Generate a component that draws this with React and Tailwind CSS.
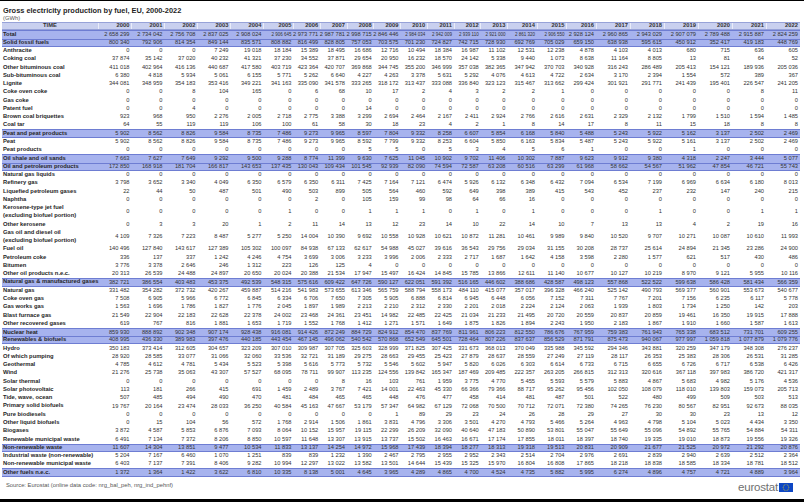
import React from "react";

const YEARS = ["2000","2001","2002","2003","2004","2005","2006","2007","2008","2009","2010","2011","2012","2013","2014","2015","2016","2017","2018","2019","2020","2021","2022"];

const ROWS = [
  ["h","Total","2 658 299,2 734 042,2 756 708,2 837 025,2 908 024,2 906 645,2 973 771,2 987 781,2 998 715,2 846 446,2 984 034,2 942 009,2 939 110,2 921 000,2 861 320,2 906 550,2 928 124,2 960 865,2 943 029,2 907 079,2 789 488,2 915 887,2 824 259"],
  ["h","Solid fossil fuels","800 340,792 906,814 354,849 144,835 571,808 882,816 499,828 805,757 053,703 575,701 230,724 827,742 715,728 930,692 769,705 029,659 150,638 938,595 615,450 912,352 417,419 183,448 769"],
  ["n","Anthracite","0,0,0,7 249,19 018,18 184,15 389,18 495,16 686,12 716,10 494,18 384,16 987,11 102,12 531,12 238,4 878,4 103,4 013,680,715,636,605"],
  ["n","Coking coal","37 874,35 142,37 020,40 232,41 321,37 230,34 552,37 871,29 654,20 950,16 232,18 570,24 142,5 338,9 440,1 073,8 638,11 164,8 805,13,81,64,52"],
  ["n","Other bituminous coal","411 018,402 964,416 136,440 687,417 580,403 719,423 364,420 707,369 868,344 745,355 200,346 999,357 038,382 365,347 942,370 703,340 928,316 243,286 489,205 413,154 121,189 936,205 036"],
  ["n","Sub-bituminous coal","6 380,4 818,5 934,5 061,6 155,5 771,5 262,6 640,4 227,4 263,3 378,5 631,5 292,4 076,4 613,4 722,2 634,3 170,2 394,1 554,572,389,367"],
  ["n","Lignite","344 081,348 959,354 183,353 416,349 221,341 163,335 090,341 578,333 265,318 172,313 437,333 088,336 840,323 123,315 467,313 662,299 424,301 921,291 771,241 439,195 401,226 547,241 205"],
  ["n","Coke oven coke","0,0,8,104,165,0,6,68,10,17,2,4,3,2,2,1,0,0,0,0,0,8,11"],
  ["n","Gas coke","0,0,0,0,0,0,0,0,0,0,0,0,0,0,0,0,0,0,0,0,0,0,0"],
  ["n","Patent fuel","0,0,4,0,0,0,0,0,14,0,0,0,0,0,0,0,0,0,0,0,0,0,0"],
  ["n","Brown coal briquettes","923,968,950,2 276,2 005,2 718,2 775,3 388,3 299,2 694,2 464,2 167,2 411,2 924,2 766,2 616,2 631,2 329,2 132,1 799,1 510,1 594,1 485"],
  ["n","Coal tar","64,55,119,119,106,100,61,58,30,18,23,4,2,1,8,14,17,8,11,15,18,8,8"],
  ["h","Peat and peat products","5 902,8 562,8 826,9 584,8 735,7 486,9 273,9 965,8 597,7 804,9 332,8 258,6 607,5 854,6 168,5 840,5 488,5 243,5 922,5 162,3 137,2 502,2 469"],
  ["n","Peat","5 902,8 562,8 826,9 584,8 735,7 486,9 273,9 965,8 592,7 799,9 332,8 253,6 604,5 850,6 163,5 834,5 487,5 243,5 922,5 161,3 137,2 502,2 469"],
  ["n","Peat products","0,0,0,0,0,0,0,0,5,5,0,5,3,4,5,6,1,0,0,1,0,0,0"],
  ["h","Oil shale and oil sands","7 663,7 627,7 649,9 292,9 500,9 288,8 774,11 399,9 630,7 625,11 045,10 902,9 702,11 406,10 302,7 887,9 623,9 912,9 380,4 318,2 247,3 444,5 077"],
  ["h","Oil and petroleum products","172 850,168 918,181 704,166 817,143 653,137 435,130 043,109 434,101 545,92 939,82 090,74 594,72 587,63 208,60 516,63 299,61 968,58 662,54 567,51 962,47 854,46 721,55 743"],
  ["n","Natural gas liquids","0,0,0,0,0,0,0,0,0,0,0,0,0,0,0,0,0,0,0,0,0,0,0"],
  ["n","Refinery gas","3 798,3 652,3 340,4 049,6 350,6 579,6 350,6 311,7 425,7 164,7 121,6 474,5 926,6 132,6 348,6 432,7 094,6 534,7 199,6 969,6 634,6 180,8 013"],
  ["n","Liquefied petroleum gases","22,44,50,487,501,490,503,899,505,564,460,592,649,398,389,415,543,452,237,232,147,240,215"],
  ["n","Naphtha","0,0,0,0,0,0,2,0,105,159,99,98,64,66,16,0,0,0,0,0,0,0,0"],
  ["n",["Kerosene-type jet fuel","(excluding biofuel portion)"],"0,0,0,0,0,1,0,0,1,1,1,0,1,0,1,0,0,0,1,0,0,1,1"],
  ["n","Other kerosene","0,3,3,20,1,2,11,14,13,12,23,14,10,22,14,10,7,13,13,4,2,19,16"],
  ["n",["Gas oil and diesel oil","(excluding biofuel portion)"],"4 109,7 326,7 223,8 487,5 277,5 250,14 004,10 390,9 692,10 558,10 928,10 621,10 872,11 281,10 461,9 989,9 840,10 520,9 707,10 271,10 087,10 610,11 993"],
  ["n","Fuel oil","140 496,127 840,143 617,127 389,105 302,100 097,84 938,67 133,62 617,54 988,45 027,39 616,36 543,29 756,29 034,31 155,30 208,28 737,25 614,24 894,21 345,23 286,24 900"],
  ["n","Petroleum coke","336,137,337,1 242,4 246,4 754,3 699,3 006,3 233,3 996,2 006,2 333,2 717,1 687,1 642,4 158,3 598,2 280,1 577,621,517,430,486"],
  ["n","Bitumen","3 776,3 378,2 646,246,1 312,223,126,125,4,0,0,0,0,0,0,0,0,0,0,0,0,0,0"],
  ["n","Other oil products n.e.c.","20 313,26 539,24 488,24 897,20 650,20 024,20 388,21 534,17 947,15 497,16 424,14 845,15 785,13 866,12 611,11 140,10 677,10 127,10 219,8 970,9 121,5 955,10 116"],
  ["h","Natural gas & manufactured gases","382 721,386 554,403 483,453 375,492 539,548 315,575 616,609 422,647 726,590 127,622 051,591 392,516 165,446 602,388 686,428 587,498 123,557 868,522 522,599 638,586 428,581 434,566 359"],
  ["n","Natural gas","331 482,354 282,372 732,420 267,459 887,514 216,541 983,573 655,613 346,565 759,588 794,558 173,484 110,415 077,357 017,396 328,466 240,525 142,490 793,569 377,560 901,553 673,540 677"],
  ["n","Coke oven gas","7 508,6 905,5 966,6 772,6 845,6 334,6 706,7 650,7 305,5 905,6 888,6 814,6 945,6 448,6 056,7 152,7 311,7 767,7 201,7 156,6 235,6 117,5 778"],
  ["n","Gas works gas","1 563,1 696,1 786,1 827,1 776,2 045,1 897,1 989,2 213,2 210,2 312,2 330,2 201,2 018,2 224,2 124,2 063,1 939,1 803,1 734,1 250,142,203"],
  ["n","Blast furnace gas","21 549,22 904,22 183,22 628,22 378,24 002,23 468,24 361,23 451,14 982,22 485,22 425,21 034,21 233,21 495,20 720,20 559,20 837,20 859,19 461,16 350,19 915,17 888"],
  ["n","Other recovered gases","619,767,816,1 881,1 653,1 719,1 552,1 768,1 412,1 271,1 571,1 649,1 875,1 826,1 894,2 243,1 950,2 183,1 867,1 910,1 660,1 587,1 613"],
  ["h","Nuclear heat","859 930,888 892,902 348,907 174,928 438,916 081,914 426,872 249,884 729,824 912,854 470,837 769,811 961,806 223,812 550,786 676,767 959,759 383,761 943,765 338,683 512,731 701,609 255"],
  ["h","Renewables & biofuels","408 995,436 330,389 983,397 476,440 185,443 454,467 145,496 062,540 542,570 868,652 549,645 501,728 464,807 226,837 637,856 529,871 791,875 473,940 067,977 997,1 059 818,1 077 879,1 079 776"],
  ["n","Hydro","350 183,373 414,312 605,304 657,323 209,307 010,309 987,307 705,325 603,328 999,371 825,307 425,331 673,368 013,370 049,335 988,345 592,294 346,343 881,320 259,347 179,348 308,276 237"],
  ["n","Of which pumping","28 920,28 585,33 077,31 066,32 060,33 536,32 721,31 189,29 275,28 663,29 455,25 423,27 879,28 637,28 559,27 249,27 119,28 117,26 353,25 383,28 306,26 531,31 285"],
  ["n","Geothermal","4 785,4 612,4 781,5 434,5 523,5 398,5 616,5 773,5 732,5 546,5 602,5 947,5 820,6 026,6 303,6 614,6 733,6 715,6 655,6 726,6 717,6 538,6 426"],
  ["n","Wind","21 276,25 738,35 063,43 307,57 527,68 095,78 711,99 907,113 235,124 556,139 842,165 347,187 469,209 485,222 357,263 205,266 815,312 313,320 616,367 118,397 983,386 720,421 317"],
  ["n","Solar thermal","0,0,0,0,0,0,0,8,16,103,761,1 959,3 775,4 770,5 455,5 593,5 579,5 883,4 867,5 683,4 982,5 176,4 536"],
  ["n","Solar photovoltaic","113,181,266,415,691,1 459,2 489,3 767,7 421,14 001,22 463,45 330,66 366,79 366,88 717,95 262,95 456,102 050,108 079,118 010,139 803,159 073,205 713"],
  ["n","Tide, wave, ocean","507,485,494,490,470,481,484,465,465,448,476,477,458,414,481,487,501,522,480,499,509,503,513"],
  ["n","Primary solid biofuels","19 767,20 164,23 474,28 033,36 250,40 584,45 163,47 667,53 179,57 347,64 982,67 129,72 068,70 500,70 712,72 071,72 380,74 265,76 230,80 567,82 951,92 673,88 035"],
  ["n","Pure biodiesels","0,0,0,0,0,0,0,0,0,1,89,29,23,24,26,28,29,27,30,30,23,13,12"],
  ["n","Other liquid biofuels","0,15,104,56,572,1 768,2 914,1 506,1 861,3 831,4 796,3 306,3 501,4 270,4 793,5 466,5 264,4 963,4 798,5 104,5 023,4 434,3 350"],
  ["n","Biogases","3 872,4 587,5 853,6 876,7 093,8 064,10 152,15 957,19 115,22 299,26 209,32 090,40 640,47 183,50 890,53 801,55 047,55 649,55 096,54 892,55 765,54 884,54 311"],
  ["n","Renewable municipal waste","6 491,7 134,7 372,8 206,8 850,10 597,11 648,13 307,13 915,13 737,15 502,16 463,16 671,17 174,17 855,18 011,18 397,18 740,19 335,19 010,18 873,19 556,19 326"],
  ["h","Non-renewable waste","11 607,14 304,13 851,9 477,10 534,11 833,13 137,14 254,14 972,15 968,17 439,18 394,18 277,18 313,19 318,19 513,20 831,20 909,21 677,21 525,20 972,21 292,20 876"],
  ["n","Industrial waste (non-renewable)","5 204,7 167,6 460,1 070,1 251,839,839,1 232,1 390,2 467,2 795,2 955,2 952,2 343,2 514,2 704,2 976,2 691,2 839,2 940,2 639,2 512,2 364"],
  ["n","Non-renewable municipal waste","6 403,7 137,7 391,8 406,9 282,10 994,12 297,13 022,13 582,13 501,14 644,15 439,15 325,15 970,16 804,16 808,17 865,18 218,18 838,18 585,18 334,18 781,18 512"],
  ["h","Other fuels n.e.c.","1 372,1 364,1 422,3 622,6 810,10 335,8 138,5 001,4 645,3 965,4 289,4 865,4 700,4 524,4 735,5 882,5 995,6 274,4 896,4 757,4 721,4 889,3 964"],
];

const SMALL = new Set([5, 10, 11, 12, 13, 14, 15]);
const GRID =
  "grid grid-cols-[96px_repeat(5,33px)_30px_repeat(8,26.75px)_repeat(3,29.5px)_repeat(6,34px)]";

function Row({ type, label, vals, nextHl, isTotal }) {
  const hl = type === "h";
  const dbl = Array.isArray(label);
  const cells = vals.split(",");
  return (
    <div
      className={`${GRID} ${dbl ? "h-[16.54px]" : "h-[8.27px]"} ${
        hl ? "bg-[#a7b3ee] border-t border-[#6e7dd2]" : ""
      } ${hl && !nextHl ? "border-b" : ""}`}
    >
      {dbl ? (
        <div className="flex flex-col justify-center pl-[1px] text-[5.8px] leading-[7.8px] font-bold whitespace-nowrap text-[#262626]">
          <span>{label[0]}</span>
          <span>{label[1]}</span>
        </div>
      ) : (
        <div className="flex items-center pl-[1px] text-[5.8px] leading-none font-bold whitespace-nowrap text-[#262626]">
          {label}
        </div>
      )}
      {cells.map((v, i) => (
        <div
          key={i}
          className={`flex items-center justify-end pr-[1.5px] leading-none whitespace-nowrap text-[#333] ${
            isTotal && SMALL.has(i) ? "text-[4.5px]" : "text-[5.7px]"
          }`}
        >
          {v}
        </div>
      ))}
    </div>
  );
}

function EuFlag() {
  const stars = [];
  for (let i = 0; i < 12; i++) {
    const a = (i / 12) * Math.PI * 2;
    stars.push(
      <circle key={i} cx={7 + Math.cos(a) * 2.9} cy={4.5 + Math.sin(a) * 2.9} r="0.45" fill="#ffdd00" />
    );
  }
  return (
    <svg width="14" height="9" viewBox="0 0 14 9" className="block">
      <rect width="14" height="9" fill="#0e47c4" />
      {stars}
    </svg>
  );
}

export default function App() {
  return (
    <div className="w-[804px] h-[502px] flex flex-col bg-white overflow-hidden font-['Liberation_Sans',Arial,sans-serif]">
      <div className="h-[1px] bg-black shrink-0" />
      <div className="pl-[3px] pt-[5px] text-[7.4px] leading-[9px] font-bold text-[#1f1f1f]">
        Gross electricity production by fuel, EU, 2000-2022
      </div>
      <div className="pl-[3px] text-[5.8px] leading-[7px] text-[#555]">(GWh)</div>
      <div className="ml-[2px] w-[797.5px]">
        <div className={`${GRID} h-[8.27px] bg-[#c9d0ef] border-y border-[#97a2d8]`}>
          <div className="flex items-center justify-center text-[5.8px] leading-none font-bold text-[#333]">
            TIME
          </div>
          {YEARS.map((y) => (
            <div
              key={y}
              className="flex items-center justify-end pr-[1.5px] text-[5.8px] leading-none font-bold text-[#333] border-l border-white/60"
            >
              {y}
            </div>
          ))}
        </div>
        {ROWS.map((r, i) => (
          <Row
            key={i}
            type={r[0]}
            label={r[1]}
            vals={r[2]}
            isTotal={i === 0}
            nextHl={i + 1 < ROWS.length && ROWS[i + 1][0] === "h"}
          />
        ))}
      </div>
      <div className="h-[19px] flex items-center justify-between pl-[6px] pr-[11px]">
        <span className="text-[5.8px] leading-none text-[#555]">
          Source: Eurostat (online data code: nrg_bal_peh, nrg_ind_pehnf)
        </span>
        <div className="flex items-end gap-[1px] mt-[2px]">
          <span className="text-[11.5px] leading-[10px] text-[#707070] tracking-[-0.2px]">eurostat</span>
          <EuFlag />
        </div>
      </div>
      <div className="mt-auto h-[3px] bg-black shrink-0" />
    </div>
  );
}
